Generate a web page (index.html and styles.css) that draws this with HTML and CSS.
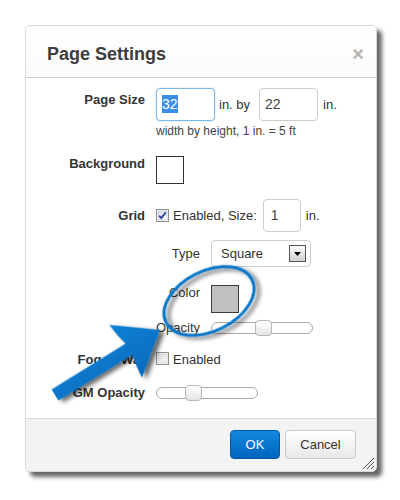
FILE: index.html
```html
<!DOCTYPE html>
<html>
<head>
<meta charset="utf-8">
<title>Page Settings</title>
<link rel="stylesheet" href="styles.css">
</head>
<body>
<div class="dialog">
  <div class="dlg-header">
    <h1 class="dlg-title">Page Settings</h1>
    <span class="dlg-close">×</span>
  </div>
  <div class="dlg-body">
    <div class="row row-size">
      <div class="label label-size">Page Size</div>
      <div class="ctrl">
        <div class="line">
          <div class="field field-w focus"><span class="sel">32</span></div>
          <span class="txt txt-by">in. by</span>
          <div class="field field-w">22</div>
          <span class="txt">in.</span>
        </div>
        <div class="hint">width by height, 1 in. = 5 ft</div>
      </div>
    </div>

    <div class="row row-bg">
      <div class="label label-bg">Background</div>
      <div class="ctrl"><div class="swatch swatch-white"></div></div>
    </div>

    <div class="row row-grid">
      <div class="label">Grid</div>
      <div class="ctrl line">
        <svg class="cb" width="13" height="13" viewBox="0 0 13 13">
          <defs><linearGradient id="cbg1" x1="0" y1="0" x2="1" y2="1"><stop offset="0" stop-color="#d6dde8"/><stop offset="1" stop-color="#ffffff"/></linearGradient></defs>
          <rect x="0.5" y="0.5" width="12" height="12" fill="#fff" stroke="#8e8f8f"/>
          <rect x="2" y="2" width="9" height="9" fill="url(#cbg1)" stroke="#b4bccb" stroke-width="0.6"/>
          <path d="M3.2 6.6 L5.3 9 L9.8 3.4" fill="none" stroke="#2b3f8f" stroke-width="1.8"/>
        </svg>
        <span class="txt txt-en">Enabled, Size:</span>
        <div class="field field-s">1</div>
        <span class="txt">in.</span>
      </div>
    </div>

    <div class="row row-type">
      <div class="label"></div>
      <div class="ctrl sub">
        <span class="sublabel">Type</span>
        <div class="select">
          <span>Square</span>
          <span class="sel-btn"><svg width="7" height="4" viewBox="0 0 7 4"><path d="M0 0 H7 L3.5 4 Z" fill="#000"/></svg></span>
        </div>
      </div>
    </div>

    <div class="row row-color">
      <div class="label"></div>
      <div class="ctrl sub sub-top">
        <span class="sublabel">Color</span>
        <div class="swatch swatch-gray"></div>
      </div>
    </div>

    <div class="row row-opacity">
      <div class="label"></div>
      <div class="ctrl sub">
        <span class="sublabel">Opacity</span>
        <div class="slider"><span class="thumb thumb-op"></span></div>
      </div>
    </div>

    <div class="row row-fog">
      <div class="label label-fog">Fog of War</div>
      <div class="ctrl line line-top">
        <svg class="cb" width="13" height="13" viewBox="0 0 13 13">
          <defs><linearGradient id="cbg2" x1="0" y1="0" x2="1" y2="1"><stop offset="0" stop-color="#d9d9d9"/><stop offset="1" stop-color="#fbfbfb"/></linearGradient></defs>
          <rect x="0.5" y="0.5" width="12" height="12" fill="#fff" stroke="#8e8f8f"/>
          <rect x="2" y="2" width="9" height="9" fill="url(#cbg2)" stroke="#c4c4c4" stroke-width="0.6"/>
        </svg>
        <span class="txt txt-en">Enabled</span>
      </div>
    </div>

    <div class="row row-gm">
      <div class="label">GM Opacity</div>
      <div class="ctrl">
        <div class="slider"><span class="thumb thumb-gm"></span></div>
      </div>
    </div>
  </div>
  <div class="dlg-footer">
    <button class="btn btn-primary">OK</button>
    <button class="btn btn-default">Cancel</button>
    <svg class="grip" width="13" height="13" viewBox="0 0 13 13">
      <path d="M1 12 L12 1 M5 12 L12 5 M9 12 L12 9" stroke="#555" stroke-width="1"/>
    </svg>
  </div>
</div>

<svg class="annot" width="400" height="500" viewBox="0 0 400 500">
  <defs>
    <filter id="sh" x="-30%" y="-30%" width="160%" height="160%">
      <feDropShadow dx="3" dy="4" stdDeviation="2" flood-color="#000" flood-opacity="0.6"/>
    </filter>
    <linearGradient id="ag" x1="0" y1="0" x2="0" y2="1">
      <stop offset="0" stop-color="#1283d6"/>
      <stop offset="1" stop-color="#0568bb"/>
    </linearGradient>
  </defs>
  <ellipse cx="209" cy="301" rx="48" ry="30" transform="rotate(-26.5 209 301)" fill="none" stroke="#0b77c8" stroke-width="3" filter="url(#sh)"/>
  <g transform="translate(55 395) rotate(-31.8)" filter="url(#sh)">
    <path d="M0 -6.5 L87 -6.5 Q84 -18 83 -31 L123.5 0 L83 31 Q84 18 87 6.5 L0 6.5 Z" fill="url(#ag)"/>
  </g>
</svg>
</body>
</html>
```

FILE: styles.css
```css
* { box-sizing: border-box; }

body {
  margin: 0;
  padding: 25px 0 0 25px;
  width: 400px;
  height: 500px;
  position: relative;
  background: #fff;
  font-family: "Liberation Sans", Arial, sans-serif;
  color: #333;
  font-size: 13px;
}

.dialog {
  width: 352px;
  height: 447px;
  border: 1px solid #d9d9d9;
  border-radius: 5px;
  background: #fff;
  box-shadow: 5px 5px 4px rgba(0, 0, 0, 0.6);
  display: flex;
  flex-direction: column;
  overflow: hidden;
}

.dlg-header {
  height: 52px;
  flex: none;
  border-bottom: 1px solid #cfcfcf;
  background: linear-gradient(#ffffff, #fbfbfb);
  display: flex;
  align-items: center;
  justify-content: space-between;
  padding: 4px 12px 0 21px;
}

.dlg-title {
  margin: 0;
  font-size: 18px;
  line-height: 22px;
  font-weight: bold;
  color: #3d3d3d;
}

.dlg-close {
  font-size: 20px;
  line-height: 20px;
  font-weight: bold;
  color: #b3b3b3;
}

.dlg-body {
  flex: 1;
  padding-top: 10px;
  background: #fff;
}

.row {
  display: grid;
  grid-template-columns: 119px 1fr;
  column-gap: 11px;
  align-items: center;
}

.label {
  text-align: right;
  font-weight: bold;
  line-height: 16px;
  color: #333;
}

.row-size { align-items: start; }
.label-size { padding-top: 4px; }

.row-bg { margin-top: 18px; align-items: start; }
.label-bg { line-height: 14px; padding-top: 1px; }

.row-grid { margin-top: 15px; }
.row-type { margin-top: 8px; }
.row-color { margin-top: 18px; align-items: start; }
.row-opacity { margin-top: 7px; }
.row-fog { margin-top: 16px; align-items: start; }
.row-gm { margin-top: 17px; }

.ctrl { min-width: 0; }

.line {
  display: flex;
  align-items: center;
}

.line-top { align-items: flex-start; height: 16px; }
.line-top .txt { line-height: 16px; }

.txt {
  line-height: 16px;
  margin-left: 5px;
  white-space: nowrap;
}

.txt-by { margin-right: 9px; margin-left: 4px; }
.txt-en { margin-left: 4px; margin-right: 6px; }

.field {
  height: 33px;
  border: 1px solid #cdcdcd;
  border-radius: 4px;
  background: #fff;
  font-size: 14px;
  line-height: 31px;
  padding-left: 5px;
  color: #444;
}

.field-w { width: 59px; }
.field-s { width: 38px; padding-left: 7px; }

.field.focus {
  border-color: #7fb6e4;
  box-shadow: 0 0 2px rgba(82, 168, 236, 0.45);
}

.sel {
  background: #3a8ee6;
  color: #fff;
  padding: 1px 0;
}

.hint {
  margin-top: 3px;
  font-size: 12px;
  line-height: 14px;
  color: #444;
  white-space: nowrap;
}

.swatch {
  width: 28px;
  height: 28px;
  border: 1px solid #333;
}

.swatch-white { background: #fff; }
.swatch-gray { background: #c0c0c0; border-color: #3c3c3c; }

.cb { flex: none; display: block; }

.sub {
  display: grid;
  grid-template-columns: 44px 1fr;
  column-gap: 11px;
  align-items: center;
}

.sub-top { align-items: start; }

.sublabel {
  text-align: right;
  line-height: 16px;
  white-space: nowrap;
  color: #333;
}

.select {
  width: 100px;
  height: 27px;
  border: 1px solid #cdcdcd;
  border-radius: 4px;
  background: #fff;
  display: flex;
  align-items: center;
  justify-content: space-between;
  padding: 0 4px 0 9px;
  font-size: 13px;
  color: #333;
}

.sel-btn {
  width: 17px;
  height: 17px;
  border: 1px solid #555;
  background: linear-gradient(#fdfdfd, #cfcfcf);
  display: flex;
  align-items: center;
  justify-content: center;
}

.sel-btn svg { display: block; }

.slider {
  position: relative;
  width: 102px;
  height: 12px;
  border: 1px solid #a9a9a9;
  border-radius: 6px;
  background: #fff;
}

.thumb {
  position: absolute;
  top: -3px;
  width: 17px;
  height: 16px;
  border: 1px solid #b8b8b8;
  border-radius: 4px;
  background: linear-gradient(#ffffff, #e4e4e4);
}

.thumb-op { left: 43px; }
.thumb-gm { left: 28px; }

.dlg-footer {
  position: relative;
  height: 53px;
  flex: none;
  border-top: 1px solid #dcdcdc;
  background: #f3f3f3;
  display: flex;
  justify-content: flex-end;
  align-items: flex-start;
  gap: 5px;
  padding: 11px 20px 0 0;
}

.btn {
  height: 29px;
  border-radius: 4px;
  font-family: "Liberation Sans", Arial, sans-serif;
  font-size: 13px;
  padding: 0;
  cursor: pointer;
}

.btn-primary {
  width: 50px;
  color: #fff;
  border: 1px solid #0058a8;
  background: linear-gradient(#1189de, #0064bd);
}

.btn-default {
  width: 71px;
  color: #333;
  border: 1px solid #c9c9c9;
  background: linear-gradient(#ffffff, #e8e8e8);
}

.grip {
  position: absolute;
  right: 1px;
  bottom: 1px;
}

.annot {
  position: absolute;
  left: 0;
  top: 0;
  pointer-events: none;
}
```
